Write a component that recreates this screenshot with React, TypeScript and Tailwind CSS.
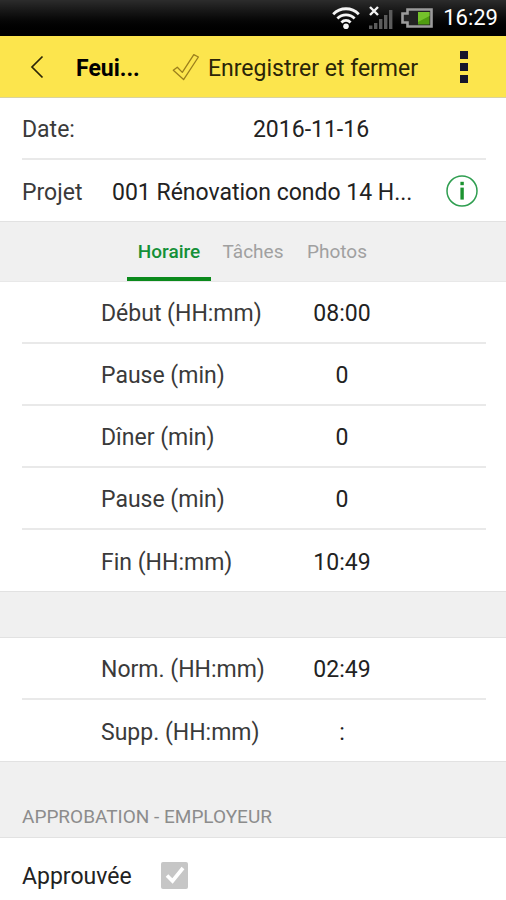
import React, { useState } from "react";

const WifiIcon = () => (
  <svg viewBox="0 0 28 24" className="h-6 w-7" fill="none" aria-hidden="true">
    <g stroke="#f4f4f4" strokeWidth="2.8">
      <path d="M1.2 8.2C8.4 0.9 19.6 0.9 26.8 8.2" />
      <path d="M5.4 12.4C10.2 7.6 17.8 7.6 22.6 12.4" />
      <path d="M9.4 16.4C12 13.8 16 13.8 18.6 16.4" />
    </g>
    <circle cx="14" cy="20.3" r="2.8" fill="#f4f4f4" />
  </svg>
);

const SignalIcon = () => (
  <svg viewBox="0 0 25 24" className="h-6 w-[25px]" aria-hidden="true">
    <g fill="#5c5c5c">
      <rect x="1" y="19.5" width="3.4" height="3.5" />
      <rect x="6" y="17" width="3.4" height="6" />
      <rect x="11" y="13" width="3.4" height="10" />
      <rect x="16" y="9" width="3.4" height="14" />
      <rect x="21" y="4" width="3.4" height="19" />
    </g>
    <path d="M2 1L10 9M10 1L2 9" stroke="#f4f4f4" strokeWidth="2.4" />
  </svg>
);

const BatteryIcon = () => (
  <svg viewBox="0 0 32 20" className="h-5 w-8" aria-hidden="true">
    <path
      d="M6.5 1.5H30.5V18.5H6.5V14.5H1.5V5.5H6.5Z"
      fill="#222222"
      stroke="#9b9b9b"
      strokeWidth="2.6"
    />
    <rect x="17" y="4" width="11.5" height="12.5" fill="#4f9d10" />
    <path d="M17 4H28.5V8L17 14Z" fill="#74c22b" />
  </svg>
);

const CheckOutlineIcon = () => (
  <svg viewBox="0 0 28 28" className="h-7 w-7" fill="none" aria-hidden="true">
    <path
      d="M1.3 17.3L5.3 14.2L10.3 19.4L21.8 1.6L26.4 4L11.6 26.6Z"
      stroke="#9c7f1c"
      strokeWidth="1.3"
      strokeLinejoin="round"
    />
  </svg>
);

const InfoIcon = () => (
  <svg viewBox="0 0 32 32" className="h-8 w-8" fill="none" aria-hidden="true">
    <circle cx="16" cy="16" r="15" stroke="#2f9e50" strokeWidth="1.5" />
    <rect x="14.4" y="6.8" width="3.4" height="3.4" fill="#1c9330" />
    <rect x="14.4" y="12.6" width="3.4" height="12" fill="#1c9330" />
  </svg>
);

const hours = [
  { id: "debut", label: "Début (HH:mm)", value: "08:00" },
  { id: "pause-1", label: "Pause (min)", value: "0" },
  { id: "diner", label: "Dîner (min)", value: "0" },
  { id: "pause-2", label: "Pause (min)", value: "0" },
  { id: "fin", label: "Fin (HH:mm)", value: "10:49" },
];

const totals = [
  { id: "norm", label: "Norm. (HH:mm)", value: "02:49" },
  { id: "supp", label: "Supp. (HH:mm)", value: ":" },
];

const tabs = ["Horaire", "Tâches", "Photos"];

type Field = { id: string; label: string; value: string };

const FieldList = ({ fields }: { fields: Field[] }) => (
  <div className="border-b border-[#e2e2e2] pr-5 pl-[22px]">
    {fields.map((field, i) => (
      <div
        key={field.id}
        className={
          i < fields.length - 1
            ? "flex h-[62px] items-center border-b-2 border-[#e9e9e9] pt-1 pl-[79px]"
            : "flex h-[61px] items-center pt-1 pl-[79px]"
        }
      >
        <label htmlFor={field.id} className="w-[181px] text-[#3a3a3a]">
          {field.label}
        </label>
        <input
          id={field.id}
          defaultValue={field.value}
          className="w-[120px] bg-transparent text-center text-[#222222] outline-none"
        />
      </div>
    ))}
  </div>
);

const App = () => {
  const [tab, setTab] = useState("Horaire");
  const [approved, setApproved] = useState(true);

  return (
    <div className="min-h-screen bg-white font-['Roboto','Liberation_Sans',sans-serif] text-[23px] leading-8 text-[#222222]">
      <div className="flex h-9 items-center justify-end bg-linear-to-b from-[#2c2c2c] to-black pr-2 text-white">
        <WifiIcon />
        <span className="ml-2">
          <SignalIcon />
        </span>
        <span className="ml-2">
          <BatteryIcon />
        </span>
        <span className="ml-2.5 text-[22px]">16:29</span>
      </div>

      <header className="flex h-[62px] items-center border-b border-[#d9d3a0] bg-[#fce54d] pr-8 pl-[30px] text-[#2b2508]">
        <button type="button" aria-label="Retour" className="w-[46px]">
          <svg
            viewBox="0 0 14 24"
            className="h-6 w-3.5"
            fill="none"
            aria-hidden="true"
          >
            <path d="M12.5 1.5L2 12L12.5 22.5" stroke="#2b2508" strokeWidth="1.7" />
          </svg>
        </button>
        <h1 className="w-24 pt-1 font-bold text-black">Feui...</h1>
        <button type="button" className="flex items-center gap-2 whitespace-nowrap">
          <CheckOutlineIcon />
          <span className="pt-1">Enregistrer et fermer</span>
        </button>
        <button
          type="button"
          aria-label="Menu"
          className="ml-auto flex w-5 flex-col items-center gap-1"
        >
          <span className="size-2 bg-[#15152b]" />
          <span className="size-2 bg-[#15152b]" />
          <span className="size-2 bg-[#15152b]" />
        </button>
      </header>

      <div className="border-b border-[#e2e2e2] pr-5 pl-[22px]">
        <div className="flex h-[62px] items-center border-b-2 border-[#e9e9e9] pt-1">
          <label htmlFor="date" className="w-[90px] text-[#3a3a3a]">
            Date:
          </label>
          <input
            id="date"
            defaultValue="2016-11-16"
            className="min-w-0 flex-1 bg-transparent pl-6 text-center outline-none"
          />
        </div>
        <div className="flex h-[61px] items-center pr-2">
          <label htmlFor="projet" className="w-[90px] pt-1 text-[#3a3a3a]">
            Projet
          </label>
          <button
            id="projet"
            type="button"
            className="min-w-0 flex-1 pt-1 text-left whitespace-nowrap"
          >
            001 Rénovation condo 14 H...
          </button>
          <button type="button" aria-label="Information">
            <InfoIcon />
          </button>
        </div>
      </div>

      <nav className="flex h-[60px] justify-center border-b border-[#e8e8e8] bg-[#f0f0f0] text-[19px]">
        {tabs.map((name) => (
          <button
            key={name}
            type="button"
            onClick={() => setTab(name)}
            className={
              tab === name
                ? "w-[84px] border-b-4 border-[#0b8a1c] pt-1 font-medium text-[#159038]"
                : "w-[84px] border-b-4 border-transparent pt-1 text-[#a0a0a0]"
            }
          >
            {name}
          </button>
        ))}
      </nav>

      <FieldList fields={hours} />
      <div className="h-[46px] border-b border-[#e2e2e2] bg-[#f0f0f0]" />
      <FieldList fields={totals} />

      <h2 className="flex h-[76px] items-end border-b border-[#e2e2e2] bg-[#f0f0f0] px-[22px] pb-1 text-[19px] text-[#8c8c8c]">
        APPROBATION - EMPLOYEUR
      </h2>
      <div className="flex h-[62px] items-center px-[22px] pt-3">
        <label htmlFor="approuvee" className="w-[139px] pt-1">
          Approuvée
        </label>
        <span className="grid">
          <input
            id="approuvee"
            type="checkbox"
            checked={approved}
            onChange={(e) => setApproved(e.target.checked)}
            className="col-start-1 row-start-1 size-[27px] appearance-none rounded-xs bg-[#c6c6c6]"
          />
          {approved && (
            <svg
              viewBox="0 0 27 27"
              className="pointer-events-none col-start-1 row-start-1 size-[27px]"
              fill="none"
              aria-hidden="true"
            >
              <path d="M6 13.5L11.5 19L22 6" stroke="#ffffff" strokeWidth="3.6" />
            </svg>
          )}
        </span>
      </div>
    </div>
  );
};

export default App;
